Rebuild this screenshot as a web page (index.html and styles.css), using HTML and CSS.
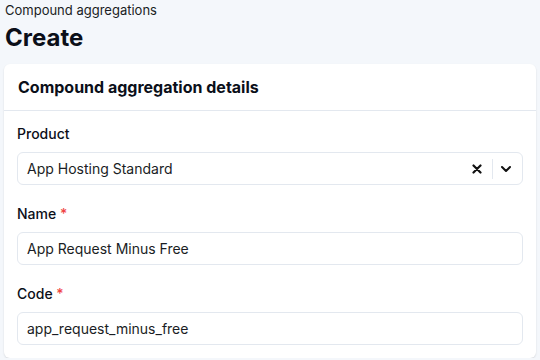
FILE: index.html
```html
<!DOCTYPE html>
<html lang="en">
<head>
    <meta charset="UTF-8">
    <meta name="viewport" content="width=device-width, initial-scale=1.0">
    <title>Create compound aggregation</title>
    <link rel="stylesheet" href="styles.css">
</head>
<body>

    <div class="page-head">
        <div class="breadcrumb">Compound aggregations</div>
        <h1>Create</h1>
    </div>

    <div class="card">
        <div class="card-header">
            <h2>Compound aggregation details</h2>
        </div>

        <div class="card-body">
            <div class="field">
                <label>Product</label>
                <div class="select">
                    <span class="select-value">App Hosting Standard</span>
                    <span class="select-clear">
                        <svg width="10" height="10" viewBox="0 0 10 10"><path d="M1.5 1.5 L8.5 8.5 M8.5 1.5 L1.5 8.5" stroke="#111" stroke-width="2.2" stroke-linecap="round"/></svg>
                    </span>
                    <span class="select-sep"></span>
                    <span class="select-arrow">
                        <svg width="12" height="8" viewBox="0 0 12 8"><path d="M2 2 L6 6 L10 2" fill="none" stroke="#111" stroke-width="2" stroke-linecap="round" stroke-linejoin="round"/></svg>
                    </span>
                </div>
            </div>

            <div class="field">
                <label>Name <span class="req">*</span></label>
                <input class="input" type="text" value="App Request Minus Free">
            </div>

            <div class="field">
                <label>Code <span class="req">*</span></label>
                <input class="input" type="text" value="app_request_minus_free">
            </div>
        </div>
    </div>

</body>
</html>
```

FILE: styles.css
```css
body {
    font-family: 'Inter', 'Liberation Sans', sans-serif;
    background: #f4f7fb;
    margin: 0;
    padding: 0 4px;
    color: #0b0f19;
}
.page-head {
    padding-left: 1px;
}
.breadcrumb {
    font-size: 13px;
    line-height: 20px;
    color: #1a1d24;
}
h1 {
    font-size: 24px;
    font-weight: 700;
    margin: 0;
    line-height: 36px;
    height: 44px;
}
.card {
    background: white;
    border-radius: 6px;
    box-shadow: 0 1px 2px rgba(0, 0, 0, 0.12);
    width: 532px;
}
.card-header {
    height: 46px;
    border-bottom: 1px solid #e3e8ef;
    display: flex;
    align-items: center;
    padding: 0 14px;
}
h2 {
    font-size: 16px;
    font-weight: 700;
    margin: 0;
}
.card-body {
    padding: 13px 13px 13px 13px;
    display: flex;
    flex-direction: column;
    gap: 19px;
}
.field label {
    display: block;
    font-size: 14px;
    line-height: 20px;
    margin-bottom: 8px;
    font-weight: 500;
}
.req {
    color: #ef4444;
}
.select, .input {
    box-sizing: border-box;
    width: 506px;
    height: 33px;
    border: 1px solid #e3e8ef;
    border-radius: 6px;
    background: white;
    font-family: inherit;
    font-size: 14px;
    color: #1a1d24;
}
.input {
    display: block;
    padding: 0 9px;
}
.select {
    display: flex;
    align-items: center;
    padding-left: 9px;
}
.select-value {
    flex: 1;
}
.select-clear {
    display: flex;
    width: 20px;
    justify-content: center;
}
.select-sep {
    width: 1px;
    height: 20px;
    background: #e3e8ef;
    margin: 0 6px 0 5px;
}
.select-arrow {
    display: flex;
    width: 14px;
    justify-content: center;
    margin-right: 9px;
}
```
